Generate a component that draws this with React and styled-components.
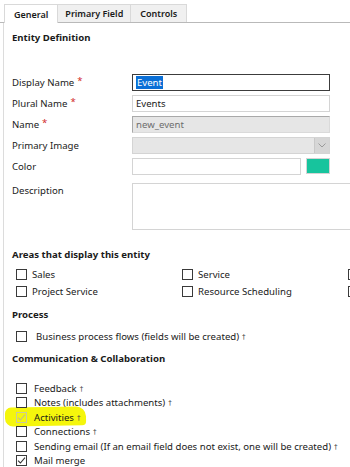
import React from "react";
import styled, { createGlobalStyle } from "styled-components";

const Global = createGlobalStyle`
  html, body {
    margin: 0;
    padding: 0;
    background: #fff;
    overflow: hidden;
  }
  body {
    font-family: "Segoe UI", "Noto Sans", "Open Sans", sans-serif;
    font-size: 9.6px;
    color: #1a1a1a;
  }
`;

const Page = styled.div`
  width: 350px;
  height: 467px;
  overflow: hidden;
`;

const TabBar = styled.div`
  display: flex;
  padding: 4px 0 0 4px;
  border-bottom: 1px solid #b9b9b9;
  height: 18px;
`;

const Tab = styled.div`
  box-sizing: border-box;
  display: flex;
  align-items: center;
  padding: 0 ${(p) => p.$pad || 9}px;
  border: 1px solid #d9d9d9;
  border-left: ${(p) => (p.$active ? "1px solid #d9d9d9" : "none")};
  border-bottom: none;
  background: ${(p) => (p.$active ? "#fff" : "#f0f0f0")};
  height: ${(p) => (p.$active ? "19px" : "18px")};
  margin-bottom: ${(p) => (p.$active ? "-1px" : "0")};
  position: relative;
  font-size: 9px;
  font-weight: 600;
  color: #1a1a1a;
`;

const Pane = styled.div`
  margin-left: 3px;
  border-left: 1px solid #dcdcdc;
  padding: 9px 0 0 8px;
  min-height: 460px;
`;

const Heading = styled.div`
  font-weight: 700;
  height: 12px;
  line-height: 12px;
  margin-top: ${(p) => p.$top || 0}px;
`;

const Form = styled.div`
  display: grid;
  grid-template-columns: 120px 198px;
  row-gap: 4px;
  margin-top: 30px;
`;

const Label = styled.div`
  display: flex;
  align-items: ${(p) => (p.$top ? "flex-start" : "center")};
  height: ${(p) => (p.$top ? "auto" : "17px")};
  margin-top: ${(p) => (p.$top ? 4 : 0)}px;
  padding-top: ${(p) => (p.$top ? 1 : 0)}px;
`;

const Star = styled.span`
  color: #d12a2a;
  margin-left: 3px;
  position: relative;
  top: -2px;
`;

const TextBox = styled.div`
  box-sizing: border-box;
  height: 17px;
  display: flex;
  align-items: center;
  padding: 0 3px;
  border: 1px solid ${(p) => (p.$focus ? "#3c3c3c" : "#d4d4d4")};
  background: ${(p) => (p.$disabled ? "#e6e6e6" : "#fff")};
  color: ${(p) => (p.$disabled ? "#6d6d6d" : "#1a1a1a")};
  ${(p) => p.$disabled && "border-color: #a9a9a9 #dadada #dadada #a9a9a9;"}
`;

const Selected = styled.span`
  background: #0a6fd6;
  color: #fff;
  padding: 0 1px;
`;

const SelectBox = styled.div`
  box-sizing: border-box;
  height: 17px;
  display: flex;
  justify-content: flex-end;
  background: #e6e6e6;
  border: 1px solid #d4d4d4;
`;

const DropButton = styled.div`
  width: 14px;
  display: flex;
  align-items: center;
  justify-content: center;
  background: #d6d6d6;
  border-left: 1px solid #c8c8c8;
`;

const ColorRow = styled.div`
  display: flex;
  gap: 5px;
  height: 17px;
`;

const ColorSwatch = styled.div`
  width: 24px;
  height: 16px;
  box-sizing: border-box;
  background: #17c49d;
  border: 1px solid #d4d4d4;
`;

const TextArea = styled.div`
  box-sizing: border-box;
  width: 222px;
  height: 47px;
  margin-top: 4px;
  border: 1px solid #d4d4d4;
  background: #fff;
`;

const CheckGrid = styled.div`
  display: grid;
  grid-template-columns: repeat(3, 166px);
  grid-auto-rows: 17px;
  margin: ${(p) => p.$mt || 0}px 0 0 4px;
`;

const CheckList = styled.div`
  display: flex;
  flex-direction: column;
  margin: ${(p) => p.$mt || 0}px 0 0 4px;
`;

const CheckRow = styled.div`
  display: flex;
  align-items: center;
  height: ${(p) => p.$h || 17}px;
  white-space: nowrap;
  position: relative;
`;

const Box = styled.span`
  width: 11px;
  height: 11px;
  box-sizing: border-box;
  border: 1px solid ${(p) => (p.$faded ? "#c9c9a0" : "#3a3a3a")};
  background: ${(p) => (p.$faded ? "transparent" : "#fff")};
  display: inline-flex;
  align-items: center;
  justify-content: center;
  flex: none;
`;

const Dagger = styled.span`
  font-family: "DejaVu Sans", sans-serif;
  font-size: 7px;
  color: #444;
  margin-left: 3px;
  position: relative;
  top: -1px;
`;

const Highlight = styled.span`
  position: absolute;
  left: -11px;
  top: -3px;
  width: 81px;
  height: 19px;
  background: #f5f60c;
  border-radius: 6px 10px 4px 8px;
  transform: rotate(-1deg);
  z-index: 0;
`;

const Above = styled.span`
  position: relative;
  z-index: 1;
  display: inline-flex;
  align-items: center;
  gap: ${(p) => p.$gap || 5}px;
`;

const Check = ({ color = "#333" }) => (
  <svg width="9" height="9" viewBox="0 0 9 9">
    <path d="M1 4.6 L3.4 7 L8 1.6" fill="none" stroke={color} strokeWidth="1.1" />
  </svg>
);

const Chevron = () => (
  <svg width="8" height="5" viewBox="0 0 8 5">
    <path d="M0.5 0.5 L4 4 L7.5 0.5" fill="none" stroke="#9a9a9a" strokeWidth="1" />
  </svg>
);

function Item({ label, dagger, checked, faded, gap, h }) {
  return (
    <CheckRow $h={h}>
      {faded && <Highlight />}
      <Above $gap={gap}>
        <Box $faded={faded}>
          {checked && <Check color={faded ? "#c2c28a" : "#333"} />}
        </Box>
        <span>
          {label}
          {dagger && <Dagger>†</Dagger>}
        </span>
      </Above>
    </CheckRow>
  );
}

export default function App() {
  return (
    <Page>
      <Global />
      <TabBar>
        <Tab $active $pad={9}>General</Tab>
        <Tab $pad={7}>Primary Field</Tab>
        <Tab $pad={9}>Controls</Tab>
      </TabBar>
      <Pane>
        <Heading>Entity Definition</Heading>
        <Form>
          <Label>
            Display Name<Star>*</Star>
          </Label>
          <TextBox $focus>
            <Selected>Event</Selected>
          </TextBox>
          <Label>
            Plural Name<Star>*</Star>
          </Label>
          <TextBox>Events</TextBox>
          <Label>
            Name<Star>*</Star>
          </Label>
          <TextBox $disabled>new_event</TextBox>
          <Label>Primary Image</Label>
          <SelectBox>
            <DropButton>
              <Chevron />
            </DropButton>
          </SelectBox>
          <Label>Color</Label>
          <ColorRow>
            <TextBox style={{ flex: 1 }} />
            <ColorSwatch />
          </ColorRow>
          <Label $top>Description</Label>
          <TextArea />
        </Form>

        <Heading $top={19}>Areas that display this entity</Heading>
        <CheckGrid $mt={5}>
          <Item label="Sales" />
          <Item label="Service" />
          <Item label="" />
          <Item label="Project Service" />
          <Item label="Resource Scheduling" />
          <Item label="" />
        </CheckGrid>

        <Heading $top={9}>Process</Heading>
        <CheckList $mt={7}>
          <Item label="Business process flows (fields will be created)" dagger gap={9} />
        </CheckList>

        <Heading $top={8}>Communication &amp; Collaboration</Heading>
        <CheckList $mt={16}>
          <Item label="Feedback" dagger gap={7} h={14.5} />
          <Item label="Notes (includes attachments)" dagger gap={7} h={14.5} />
          <Item label="Activities" dagger checked faded gap={7} h={14.5} />
          <Item label="Connections" dagger gap={7} h={14.5} />
          <Item
            label="Sending email (If an email field does not exist, one will be created)"
            dagger
            gap={7}
            h={14.5}
          />
          <Item label="Mail merge" checked gap={7} h={14.5} />
        </CheckList>
      </Pane>
    </Page>
  );
}
